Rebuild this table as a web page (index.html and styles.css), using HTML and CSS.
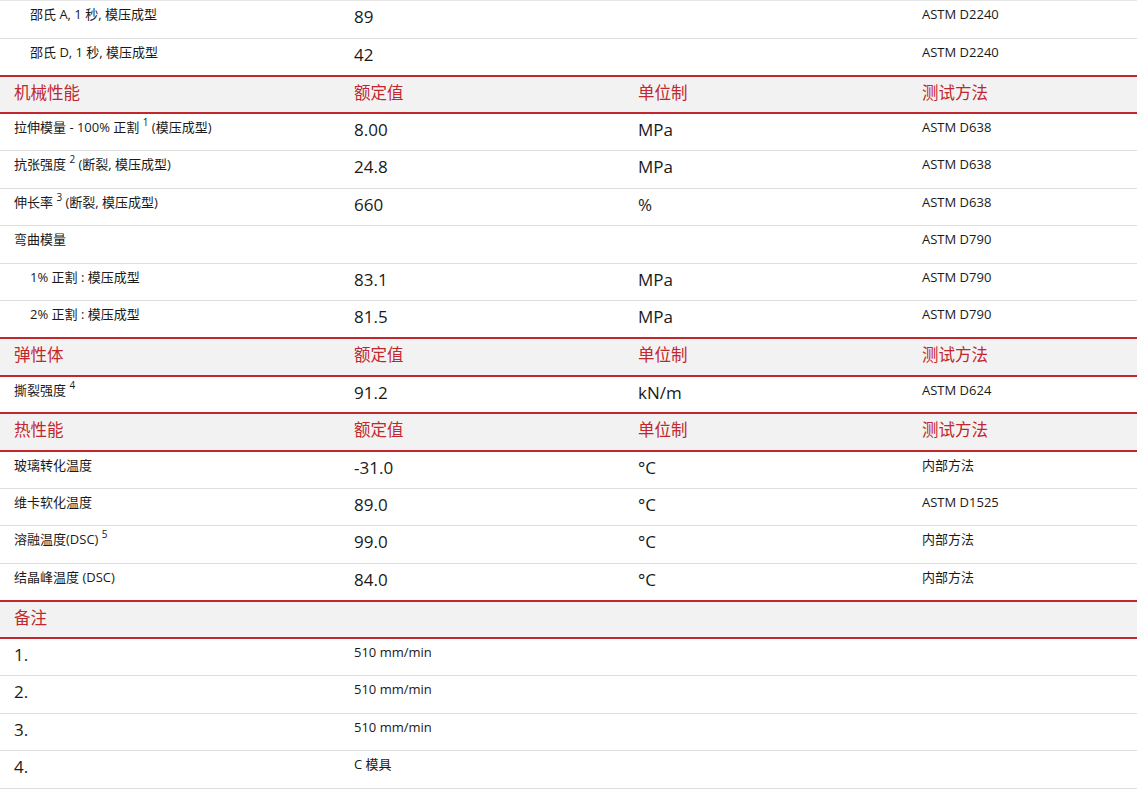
FILE: index.html
```html
<!DOCTYPE html>
<html lang="zh-CN">
<head>
<meta charset="utf-8">
<link rel="stylesheet" href="styles.css">
</head>
<body>
<table class="props">
  <colgroup><col class="c1"><col class="c2"><col class="c3"><col class="c4"></colgroup>
  <tbody>
    <tr class="first"><td class="sm ind">邵氏 A, 1 秒, 模压成型</td><td class="val">89</td><td class="val"></td><td class="sm">ASTM D2240</td></tr>
    <tr><td class="sm ind">邵氏 D, 1 秒, 模压成型</td><td class="val">42</td><td class="val"></td><td class="sm">ASTM D2240</td></tr>
    <tr class="head"><td>机械性能</td><td>额定值</td><td>单位制</td><td>测试方法</td></tr>
    <tr><td class="sm">拉伸模量 - 100% 正割 <sup>1</sup> (模压成型)</td><td class="val">8.00</td><td class="val">MPa</td><td class="sm">ASTM D638</td></tr>
    <tr><td class="sm">抗张强度 <sup>2</sup> (断裂, 模压成型)</td><td class="val">24.8</td><td class="val">MPa</td><td class="sm">ASTM D638</td></tr>
    <tr><td class="sm">伸长率 <sup>3</sup> (断裂, 模压成型)</td><td class="val">660</td><td class="val">%</td><td class="sm">ASTM D638</td></tr>
    <tr><td class="sm">弯曲模量</td><td class="val"></td><td class="val"></td><td class="sm">ASTM D790</td></tr>
    <tr><td class="sm ind">1% 正割 : 模压成型</td><td class="val">83.1</td><td class="val">MPa</td><td class="sm">ASTM D790</td></tr>
    <tr><td class="sm ind">2% 正割 : 模压成型</td><td class="val">81.5</td><td class="val">MPa</td><td class="sm">ASTM D790</td></tr>
    <tr class="head"><td>弹性体</td><td>额定值</td><td>单位制</td><td>测试方法</td></tr>
    <tr><td class="sm">撕裂强度 <sup>4</sup></td><td class="val">91.2</td><td class="val">kN/m</td><td class="sm">ASTM D624</td></tr>
    <tr class="head"><td>热性能</td><td>额定值</td><td>单位制</td><td>测试方法</td></tr>
    <tr><td class="sm">玻璃转化温度</td><td class="val">-31.0</td><td class="val">°C</td><td class="sm">内部方法</td></tr>
    <tr><td class="sm">维卡软化温度</td><td class="val">89.0</td><td class="val">°C</td><td class="sm">ASTM D1525</td></tr>
    <tr><td class="sm">溶融温度(DSC) <sup>5</sup></td><td class="val">99.0</td><td class="val">°C</td><td class="sm">内部方法</td></tr>
    <tr><td class="sm">结晶峰温度 (DSC)</td><td class="val">84.0</td><td class="val">°C</td><td class="sm">内部方法</td></tr>
    <tr class="head"><td colspan="4">备注</td></tr>
    <tr><td class="val">1.</td><td class="sm" colspan="3">510 mm/min</td></tr>
    <tr><td class="val">2.</td><td class="sm" colspan="3">510 mm/min</td></tr>
    <tr><td class="val">3.</td><td class="sm" colspan="3">510 mm/min</td></tr>
    <tr><td class="val">4.</td><td class="sm" colspan="3">C 模具</td></tr>
  </tbody>
</table>
</body>
</html>
```
FILE: styles.css
```css
html, body {
  margin: 0;
  padding: 0;
  background: #ffffff;
}
body {
  font-family: "Open Sans", "Noto Sans CJK SC", sans-serif;
  color: #1a1a1a;
}
.props {
  width: 1137px;
  border-collapse: collapse;
  table-layout: fixed;
}
.c1 { width: 340px; }
.c2 { width: 284px; }
.c3 { width: 284px; }
.c4 { width: 229px; }
.props td {
  height: 37.5px;
  box-sizing: border-box;
  padding: 0 0 0 14px;
  border-bottom: 1px solid #dedede;
  vertical-align: top;
  white-space: nowrap;
}
.props tr.first td {
  border-top: 1px solid #e6e6e6;
}
.props td.sm {
  font-size: 13px;
  line-height: 16px;
  padding-top: 5px;
}
.props td.ind {
  padding-left: 30px;
}
.props td.val {
  font-size: 17px;
  line-height: 22px;
  padding-top: 5px;
}
.props sup {
  font-size: 10px;
  line-height: 0;
  vertical-align: 6px;
}
.props tr.head td {
  background: #f2f2f2;
  color: #c1272d;
  font-size: 16.5px;
  line-height: 22px;
  padding-top: 5px;
  border-top: 2px solid #c1272d;
  border-bottom: 2px solid #c1272d;
}
```
